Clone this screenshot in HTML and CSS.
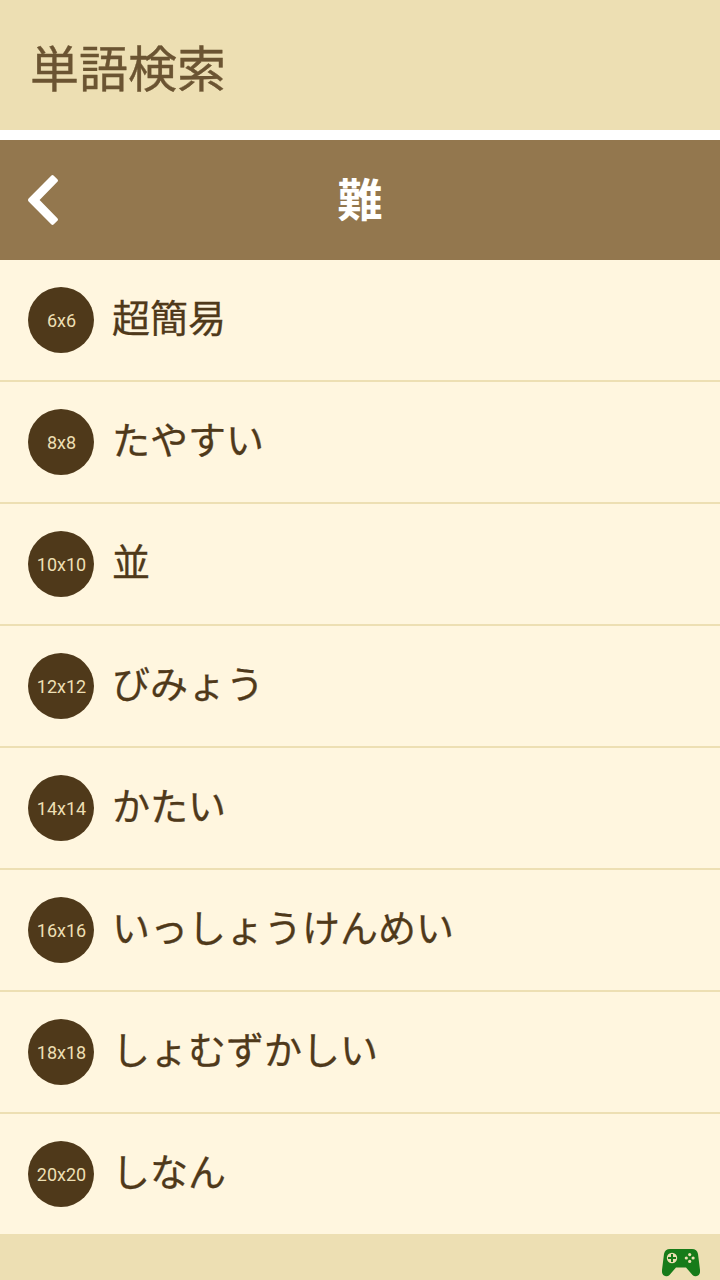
FILE: index.html
```html
<!DOCTYPE html>
<html lang="ja">
<head>
  <meta charset="UTF-8" />
  <meta name="viewport" content="width=device-width, initial-scale=1.0" />
  <title>単語検索</title>
  <link rel="stylesheet" href="styles.css">
</head>
<body>
  <header class="app-bar">単語検索</header>

  <div class="level-bar">
    <a href="#" class="back" aria-label="戻る">
      <svg width="30" height="50" viewBox="0 0 30 50">
        <path d="M23.2.7Q24.5-.5 25.8.7L29.4 4.2Q30.6 5.500 29.4 6.800L11.600 25 29.4 43.2Q30.6 44.5 29.4 45.8L25.8 49.3Q24.5 50.5 23.2 49.3L.6 26.5Q-.6 25 .6 23.5Z" fill="#fff"/>
      </svg>
    </a>
    <h1>難</h1>
  </div>

  <ul class="levels">
    <li><span class="size">6x6</span><span class="name">超簡易</span></li>
    <li><span class="size">8x8</span><span class="name">たやすい</span></li>
    <li><span class="size">10x10</span><span class="name">並</span></li>
    <li><span class="size">12x12</span><span class="name">びみょう</span></li>
    <li><span class="size">14x14</span><span class="name">かたい</span></li>
    <li><span class="size">16x16</span><span class="name">いっしょうけんめい</span></li>
    <li><span class="size">18x18</span><span class="name">しょむずかしい</span></li>
    <li><span class="size">20x20</span><span class="name">しなん</span></li>
  </ul>

  <footer class="bottom-bar">
    <svg width="38" height="28" viewBox="0 0 38 28">
      <path d="M8 0H30Q35 0 36 5L38 21Q38.600 26.500 34 27.300Q32 27.500 30.500 26L24 18.500H14L7.500 26Q6 27.500 4 27.300Q-.6 26.500 0 21L2 5Q3 0 8 0Z" fill="#177b19"/>
      <circle cx="10" cy="9" r="5.200" fill="#eddfb3"/>
      <path d="M10 5V13M6 9H14" stroke="#177b19" stroke-width="2"/>
      <g fill="#eddfb3">
        <circle cx="27.700" cy="5.600" r="1.600"/>
        <circle cx="24.300" cy="9" r="1.600"/>
        <circle cx="31.100" cy="9" r="1.600"/>
        <circle cx="27.700" cy="12.400" r="1.600"/>
      </g>
    </svg>
  </footer>
</body>
</html>
```
FILE: styles.css
```css
body {
  margin: 0;
  height: 1280px;
  display: flex;
  flex-direction: column;
  font-family: Roboto, 'Noto Sans CJK JP', sans-serif;
  background: #fff6df;
  color: #4f391a;
  overflow: hidden;
}

.app-bar {
  box-sizing: border-box;
  height: 140px;
  padding-left: 30px;
  border-bottom: 10px solid #fff;
  background: #eddfb3;
  color: #6b5432;
  font-size: 49px;
  line-height: 142px;
  -webkit-text-stroke: 0.4px #6b5432;
}

.level-bar {
  height: 120px;
  padding: 0 28px;
  display: grid;
  grid-template-columns: 30px 1fr 30px;
  align-items: center;
  background: #93774e;
  color: #fff;
}

.back svg {
  display: block;
}

.level-bar h1 {
  margin: 0;
  padding-top: 4px;
  font-size: 45px;
  line-height: 116px;
  text-align: center;
}

.levels {
  margin: 0;
  padding: 0;
  list-style: none;
}

.levels li {
  height: 120px;
  padding-left: 28px;
  display: flex;
  align-items: center;
  gap: 18px;
  border-bottom: 2px solid #eddfb3;
}

.levels li:last-child {
  border-bottom: none;
}

.size {
  box-sizing: border-box;
  width: 66px;
  height: 66px;
  padding-left: 1px;
  border-radius: 50%;
  background: #4f391a;
  color: #eddfb3;
  font-size: 18px;
  line-height: 68px;
  text-align: center;
}

.name {
  height: 120px;
  font-size: 38px;
  line-height: 118px;
  -webkit-text-stroke: 0.3px #4f391a;
}

.bottom-bar {
  flex: 1;
  padding: 0 20px;
  display: flex;
  justify-content: flex-end;
  background: #eddfb3;
}

.bottom-bar svg {
  margin-top: 15px;
}
```
